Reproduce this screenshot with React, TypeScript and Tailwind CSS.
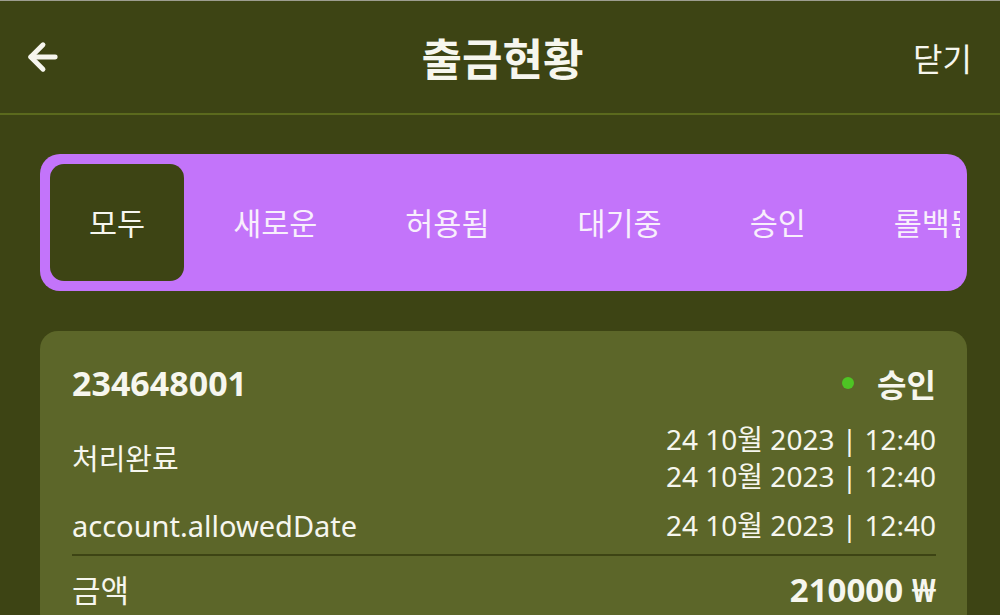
import React, { useState } from 'react';
import { ArrowLeft } from 'lucide-react';

const tabs = ['모두', '새로운', '허용됨', '대기중', '승인', '롤백됨'];

const DateText: React.FC = () => (
  <div className="whitespace-nowrap">24 10월 2023 | 12:40</div>
);

const App: React.FC = () => {
  const [active, setActive] = useState<string>('모두');

  return (
    <div
      className="min-h-[615px] bg-[#3d4414] border-t border-[#9d9d90] text-[#f6f6ee]"
      style={{ fontFamily: '"Noto Sans", "Noto Sans CJK KR", sans-serif' }}
    >
      {/* header */}
      <div className="h-[114px] grid grid-cols-[1fr_auto_1fr] items-center pl-[33px] pr-[28px] border-b-2 border-[#5b6a1d]">
        <button className="justify-self-start -ml-[11px]">
          <ArrowLeft size={42} strokeWidth={2.8} />
        </button>
        <div className="text-[44px] font-bold" style={{ fontFamily: '"Noto Sans CJK KR", sans-serif' }}>출금현황</div>
        <button className="justify-self-end text-[32px]" style={{ fontFamily: '"Noto Sans CJK KR", sans-serif' }}>닫기</button>
      </div>

      <div className="pl-[40px] pr-[33px] pt-[39px]">
        {/* status tabs */}
        <div className="rounded-[20px] bg-[#c374fa] p-[10px] pr-[7px]">
          <div className="flex gap-[10px] overflow-hidden">
            {tabs.map((tab) => (
              <button
                key={tab}
                onClick={() => setActive(tab)}
                className={
                  active === tab
                    ? 'shrink-0 h-[117px] px-[39px] rounded-[14px] bg-[#3d4414] text-[30.5px] text-[#f6f6ee]'
                    : 'shrink-0 h-[117px] px-[39px] rounded-[14px] text-[30.5px] text-[#f8effc]'
                }
                style={{ fontFamily: '"Noto Sans CJK KR", sans-serif' }}
              >
                {tab}
              </button>
            ))}
          </div>
        </div>

        {/* withdrawal card */}
        <div className="mt-[40px] rounded-[18px] bg-[#5c6629] pl-[32px] pr-[31px] pt-[30px] pb-[20px]">
          <div className="flex items-center justify-between h-[44px]">
            <div className="text-[34px] font-bold">234648001</div>
            <div className="flex items-center gap-[23px]">
              <span className="w-[12px] h-[12px] rounded-full bg-[#4ec424]" />
              <span className="text-[32px] font-bold" style={{ fontFamily: '"Noto Sans CJK KR", sans-serif' }}>승인</span>
            </div>
          </div>

          <div className="mt-[16px] flex items-center justify-between text-[29px] leading-[37px]">
            <div>처리완료</div>
            <div className="text-right text-[28px]">
              <DateText />
              <DateText />
            </div>
          </div>

          <div className="mt-[12px] flex items-center justify-between text-[29px] leading-[37px]">
            <div>account.allowedDate</div>
            <div className="text-[28px]">
              <DateText />
            </div>
          </div>

          <div className="mt-[10px] h-[2px] bg-[#3d4414]" />

          <div className="mt-[12px] flex items-center justify-between h-[44px]">
            <div className="text-[31px]">금액</div>
            <div className="text-[33px] font-bold">210000 ₩</div>
          </div>
        </div>
      </div>
    </div>
  );
};

export default App;
